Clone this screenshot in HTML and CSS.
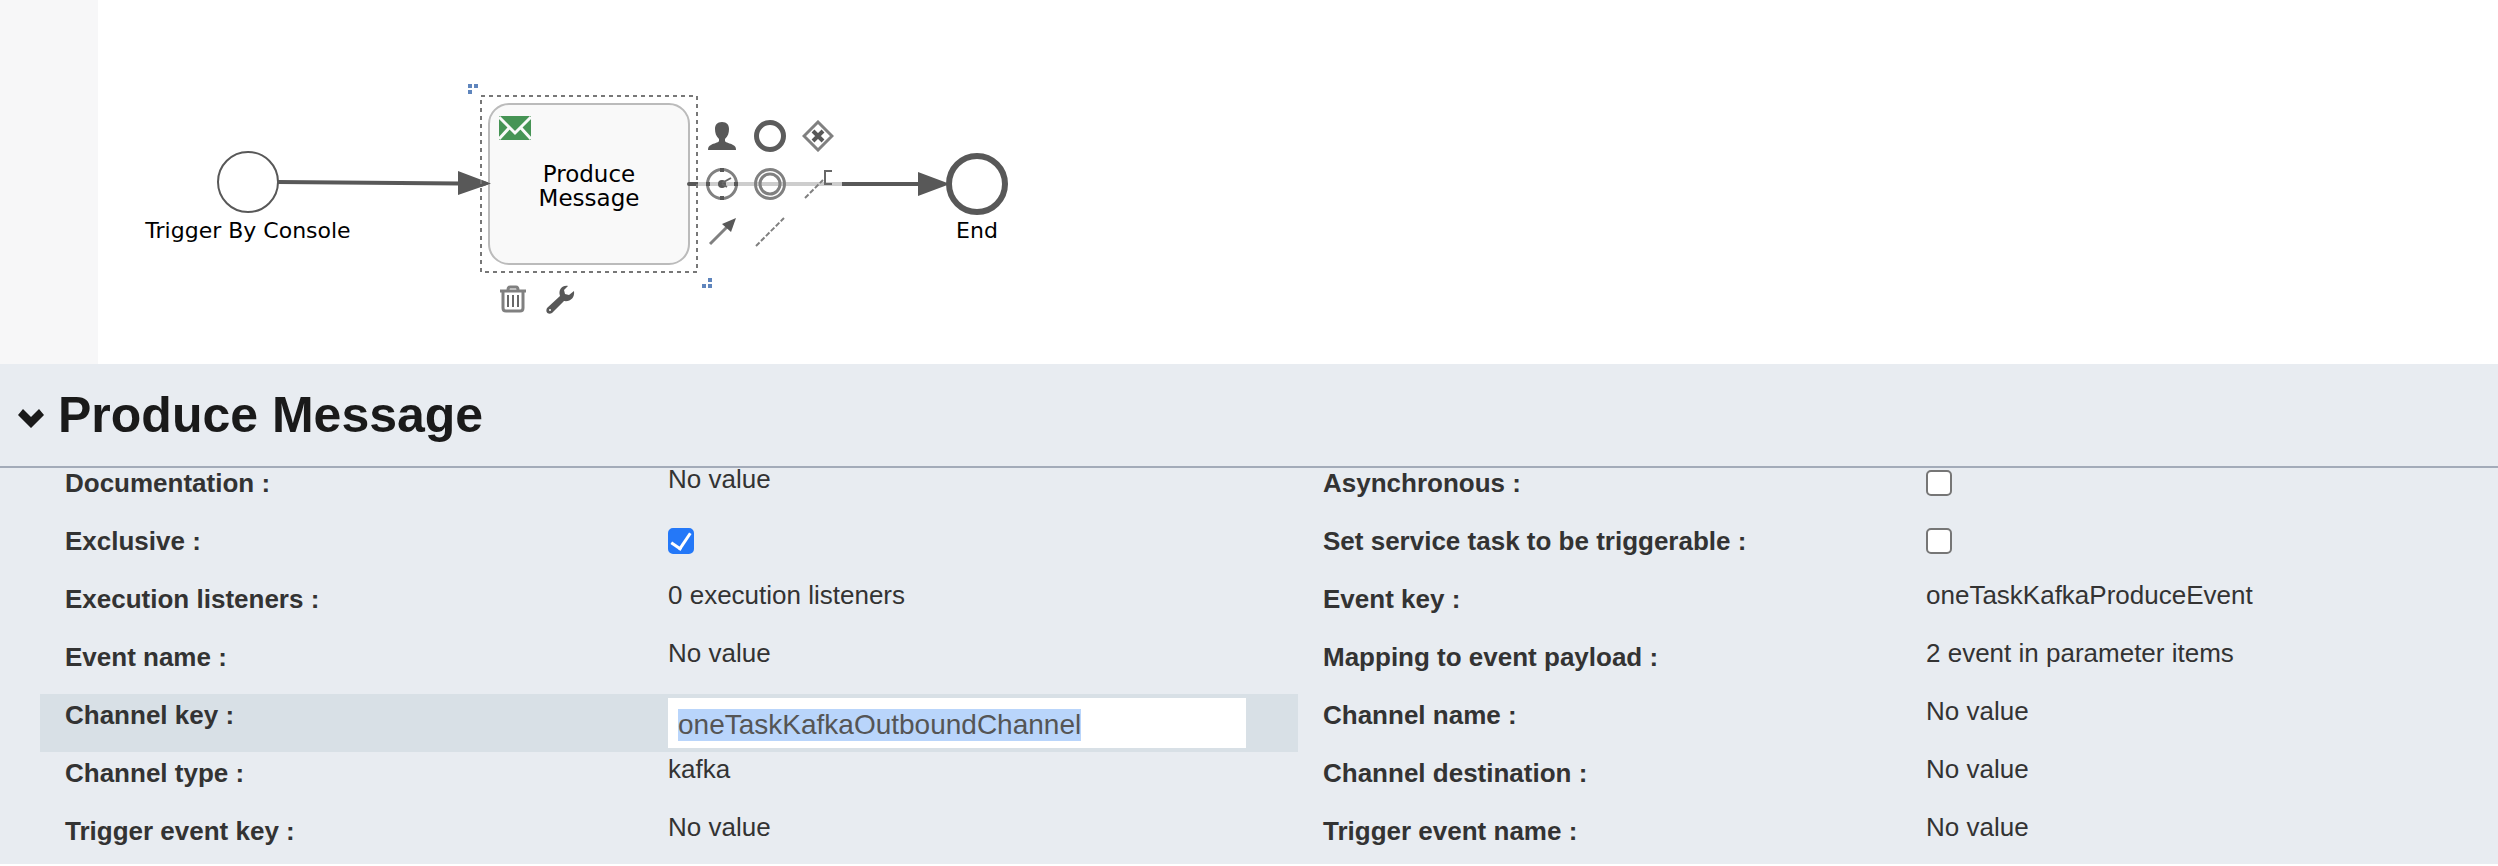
FILE: index.html
```html
<!DOCTYPE html>
<html lang="en">
<head>
<meta charset="utf-8">
<title>Produce Message</title>
<link rel="stylesheet" href="styles.css">
</head>
<body>
<main class="editor">
  <div class="workspace">
    <aside class="palette" aria-label="Palette"></aside>
    <div class="canvas">
      <svg class="diagram" viewBox="98 0 922 364" width="922" height="364" role="img" aria-label="Process diagram">
        <g class="flow">
          <path class="flow-line" d="M278 182L460 183.500M687 184H920"/>
          <path class="flow-head" d="M458 171L491 183.500L458 195ZM918 172L950 184L918 196Z"/>
        </g>
        <circle class="start" cx="248" cy="182" r="30"/>
        <text class="caption" x="248" y="238">Trigger By Console</text>
        <rect class="task" x="489" y="104" width="200" height="160" rx="20"/>
        <path class="envelope" d="M499 116H531V140H499Z"/>
        <path class="envelope-fold" d="M499 117L515 133L531 117M499 139L509 128M531 139L521 128"/>
        <path class="flow-head" d="M481 180L491 183.500L481 187Z"/>
        <path class="flow-stub" d="M689 184H698"/>
        <text class="caption task-name" x="589" y="182">Produce</text>
        <text class="caption task-name" x="589" y="206">Message</text>
        <rect class="selection" x="481" y="96" width="216" height="176"/>
        <path class="resizer" d="M468 84h4v4h-4zM474 84h4v4h-4zM468 90h4v4h-4zM708 278h4v4h-4zM702 284h4v4h-4zM708 284h4v4h-4z"/>
        <circle class="end" cx="977" cy="184" r="28"/>
        <text class="caption" x="977" y="238">End</text>
      </svg>
      <div class="quick-add">
        <button type="button" aria-label="User task"><svg viewBox="0 0 32 32"><path class="solid" d="M16 2c-5 0-7 3-7 7 0 4 1 7 4 10v2c-1 2-5 2-8 4-2 1-3 2-3 5h28c0-3-1-4-3-5-3-2-7-2-8-4v-2c3-3 4-6 4-10 0-4-2-7-7-7z"/></svg></button>
        <button type="button" aria-label="End event"><svg viewBox="0 0 32 32"><circle class="line w5" cx="16" cy="16" r="13.500"/></svg></button>
        <button type="button" aria-label="Exclusive gateway"><svg viewBox="0 0 32 32"><path class="line soft" d="M16 2L30 16L16 30L2 16Z"/><path class="line w4" d="M11 11L21 21M21 11L11 21"/></svg></button>
        <button type="button" aria-label="Timer event"><svg viewBox="0 0 32 32"><circle class="line soft" cx="16" cy="16" r="14.500"/><path class="line w4" d="M16 0v4M16 28v4M0 16h4M28 16h4"/><circle class="solid" cx="16" cy="16" r="4"/><path class="line" d="M16 15L25 10M16 16L21 19"/></svg></button>
        <button type="button" aria-label="Intermediate event"><svg viewBox="0 0 32 32"><circle class="line soft" cx="16" cy="16" r="14.500"/><circle class="line soft" cx="16" cy="16" r="10"/></svg></button>
        <button type="button" aria-label="Text annotation"><svg viewBox="0 0 32 32"><path class="line soft dots" d="M3 30L21 12"/><path class="line" d="M30 3H23V16H30"/></svg></button>
        <button type="button" aria-label="Sequence flow"><svg viewBox="0 0 32 32"><path class="line soft" d="M4 28L22 10"/><path class="solid" d="M30 2L16 8L25 16Z"/></svg></button>
        <button type="button" aria-label="Association"><svg viewBox="0 0 32 32"><path class="line soft dots" d="M2 30L30 2"/></svg></button>
      </div>
      <div class="item-tools">
        <button type="button" aria-label="Delete"><svg viewBox="0 0 32 32"><path class="line soft" d="M4 8H30M12 7Q12 4 14 4H20Q22 4 22 7M7 9V25Q7 28 10 28H24Q27 28 27 25V9"/><path class="line" d="M12 12V24M17 12V24M22 12V24"/></svg></button>
        <button type="button" aria-label="Change type"><svg viewBox="0 0 32 32"><path class="solid" d="M24 3C18 2 14 7 16 13L3 25C1 29 4 32 8 30L20 18C26 19 31 15 30 8L25 12L21 11L20 7Z"/><circle class="hole" cx="6" cy="27" r="1"/></svg></button>
      </div>
    </div>
  </div>

  <section class="panel">
    <header class="panel-header">
      <button type="button" class="collapse" aria-label="Collapse properties"><svg viewBox="0 0 26 20" width="26" height="20"><path d="M0 6L5 0L13 8L21 0L26 6L13 19Z"/></svg></button>
      <h1 class="title">Produce Message</h1>
    </header>
    <form class="fields">
      <div class="column">
        <div class="field"><span class="name">Documentation :</span><span class="value">No value</span></div>
        <div class="field"><label class="name" for="exclusive">Exclusive :</label><input class="check" id="exclusive" type="checkbox" checked></div>
        <div class="field"><span class="name">Execution listeners :</span><span class="value">0 execution listeners</span></div>
        <div class="field"><span class="name">Event name :</span><span class="value">No value</span></div>
        <div class="field active"><label class="name" for="channel-key">Channel key :</label><input class="entry" id="channel-key" type="text" value="oneTaskKafkaOutboundChannel" spellcheck="false"></div>
        <div class="field"><span class="name">Channel type :</span><span class="value">kafka</span></div>
        <div class="field"><span class="name">Trigger event key :</span><span class="value">No value</span></div>
      </div>
      <div class="column">
        <div class="field"><label class="name" for="async">Asynchronous :</label><input class="check" id="async" type="checkbox"></div>
        <div class="field"><label class="name" for="triggerable">Set service task to be triggerable :</label><input class="check" id="triggerable" type="checkbox"></div>
        <div class="field"><span class="name">Event key :</span><span class="value">oneTaskKafkaProduceEvent</span></div>
        <div class="field"><span class="name">Mapping to event payload :</span><span class="value">2 event in parameter items</span></div>
        <div class="field"><span class="name">Channel name :</span><span class="value">No value</span></div>
        <div class="field"><span class="name">Channel destination :</span><span class="value">No value</span></div>
        <div class="field"><span class="name">Trigger event name :</span><span class="value">No value</span></div>
      </div>
    </form>
  </section>
</main>
<script src="script.js"></script>
</body>
</html>
```
FILE: styles.css
```css
* { box-sizing: border-box; }

body {
  margin: 0;
  background: #fff;
  color: #333;
  font-family: "Liberation Sans", Helvetica, Arial, sans-serif;
  font-size: 26px;
  line-height: 30px;
}

button { border: 0; padding: 0; background: none; cursor: pointer; }

.workspace { display: flex; }
.palette { width: 98px; flex: none; background: #f7f7f8; }
.canvas { position: relative; flex: 1; min-width: 0; overflow: hidden; }
.diagram { display: block; }

.flow-line { fill: none; stroke: #585858; stroke-width: 4; }
.flow-stub { stroke: #585858; stroke-width: 4; stroke-linecap: round; }
.flow-head { fill: #585858; }
.start { fill: #fff; stroke: #585858; stroke-width: 2; }
.end { fill: #fff; stroke: #585858; stroke-width: 6; }
.task { fill: #f9f9f9; stroke: #bbb; stroke-width: 2; }
.envelope { fill: #469455; }
.envelope-fold { fill: none; stroke: #f9f9f9; stroke-width: 3; }
.selection { fill: none; stroke: #777; stroke-width: 2; stroke-dasharray: 4 4; }
.resizer { fill: #5f85bd; }
.caption {
  fill: #000;
  font-family: Verdana, "DejaVu Sans", sans-serif;
  font-size: 22px;
  text-anchor: middle;
}
.task-name { font-size: 23px; }

.quick-add, .item-tools { position: absolute; display: grid; grid-auto-rows: 48px; }
.quick-add { left: 600px; top: 112px; grid-template-columns: repeat(3, 48px); }
.item-tools { left: 390px; top: 275px; grid-template-columns: repeat(2, 48px); }
.quick-add button, .item-tools button {
  display: grid;
  place-items: center;
  background: rgba(255, 255, 255, 0.7);
}
.quick-add svg, .item-tools svg { width: 32px; height: 32px; }

.line { fill: none; stroke: #686868; stroke-width: 2; }
.soft { stroke: #808080; stroke-width: 3; }
.w4 { stroke: #585858; stroke-width: 4; }
.w5 { stroke: #5c5c5c; stroke-width: 5; }
.dots { stroke-dasharray: 5 2; stroke-width: 2; }
.solid { fill: #585858; }
.hole { fill: #fff; }

.panel { background: #e8ecf1; }
.panel-header {
  display: flex;
  align-items: center;
  gap: 14px;
  height: 104px;
  padding: 0 18px;
  border-bottom: 2px solid #a3abb9;
}
.collapse { display: flex; padding-top: 8px; }
.collapse svg { fill: #1a1a1a; }
.title { margin: 0; color: #1a1a1a; font-size: 50px; line-height: 60px; font-weight: bold; }

.fields {
  display: grid;
  grid-template-columns: 1258fr 1200fr;
  margin-top: -6px;
  padding-left: 40px;
}
.field {
  display: grid;
  grid-template-columns: 628fr 630fr;
  align-items: start;
  height: 58px;
}
.field:last-child { height: 54px; }
.column + .column .field { grid-template-columns: 628fr 572fr; }
.active { background: #d8e0e6; }
.name { padding: 6px 0 0 25px; font-weight: bold; }
.value { padding-top: 2px; }

.check {
  appearance: none;
  width: 26px;
  height: 26px;
  margin: 8px 0 0;
  border: 2px solid #767676;
  border-radius: 5px;
  background: #fff;
}
.check:checked {
  border-color: #2478f8;
  background: #2478f8;
  display: grid;
  place-items: center;
}
.check:checked::after {
  content: "";
  width: 9px;
  height: 17px;
  margin-top: -5px;
  border: solid #fff;
  border-width: 0 3px 3px 0;
  transform: rotate(34deg);
}

.entry {
  height: 50px;
  margin: 4px 52px 0 0;
  padding: 11px 10px 7px;
  border: 0;
  outline: 0;
  background: #fff;
  color: #555;
  font-family: inherit;
  font-size: 28px;
}
.entry::selection { background: rgba(185, 213, 251, 0.996); color: #555; }
```
FILE: script.js
```js
const entry = document.getElementById("channel-key");
entry.focus();
entry.select();
```
